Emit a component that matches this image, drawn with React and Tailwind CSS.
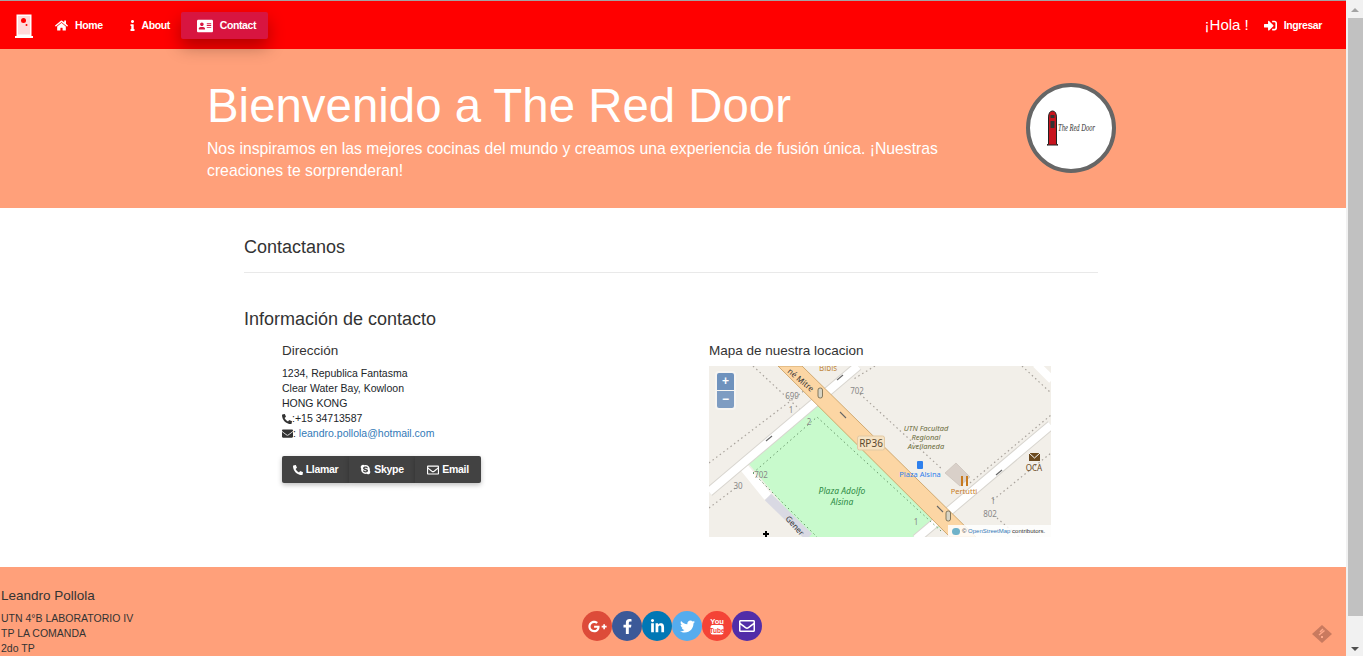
import React from "react";
import { FaHome, FaInfo, FaAddressCard, FaSignInAlt, FaPhoneAlt, FaEnvelope, FaRegEnvelope, FaSkype, FaGooglePlusG, FaFacebookF, FaLinkedinIn, FaTwitter } from "react-icons/fa";

function DoorLogo() {
  return (
    <svg width="18" height="24" viewBox="0 0 18 24" className="block">
      <rect x="1.5" y="0.5" width="15" height="21.5" fill="#fff" />
      <rect x="3" y="2" width="12" height="18.5" fill="#ffd9d9" />
      <rect x="0" y="22" width="18" height="2" fill="#fff" />
      <circle cx="8.5" cy="6.5" r="2.5" fill="#f00" />
      <circle cx="11.5" cy="11" r="1" fill="#f00" />
    </svg>
  );
}

function NavLink({ icon, label, gap = "gap-[7px]" }) {
  return (
    <a className={`flex items-center ${gap} text-[10.5px] font-bold tracking-[-0.4px] text-white`}>
      {icon}
      <span>{label}</span>
    </a>
  );
}

function RedDoorMark() {
  return (
    <svg width="50" height="36" viewBox="0 0 50 36" className="block">
      <path d="M2.5 34 V8 Q2.5 1 6.5 1 Q10.500 1 10.500 8 V34 L12 35 H1 Z" fill="#c8141e" stroke="#222" strokeWidth="1" />
      <rect x="4.500" y="5" width="4" height="3" fill="#333" />
      <rect x="4.500" y="11" width="4" height="7" fill="#333" />
      <text x="12" y="21" fontSize="11" fontStyle="italic" fill="#333" fontFamily="'Liberation Serif', serif" textLength="37" lengthAdjust="spacingAndGlyphs">The Red Door</text>
    </svg>
  );
}

function YoutubeMark() {
  return (
    <svg width="14" height="18" viewBox="0 0 14 18" className="block">
      <text x="7" y="7" fontSize="7.500" fontWeight="bold" textAnchor="middle" fill="#fff" fontFamily="'Liberation Sans', sans-serif">You</text>
      <rect x="0.500" y="8" width="13" height="9.500" rx="2" fill="#fff" />
      <text x="7" y="15.500" fontSize="6.500" fontWeight="bold" textAnchor="middle" fill="#f44336" fontFamily="'Liberation Sans', sans-serif">Tube</text>
    </svg>
  );
}

function MapImage() {
  const labelFont = "'Noto Sans', sans-serif";
  return (
    <svg width="342" height="171" viewBox="0 0 342 171" className="block bg-[#f2efe9]">
      <g fill="none" stroke="#a9a39c" strokeWidth="1.2" strokeDasharray="1.5 3">
        <path d="M44 0 L128 78" />
        <path d="M0 97 L96 24" />
        <path d="M0 142 L29 120" />
        <path d="M166 0 L143 14" />
        <path d="M151 28 L234 104" />
        <path d="M261 117 L342 49" />
        <path d="M313 0 L342 27" />
        <path d="M284 134 L342 87" />
        <path d="M288 152 L310 171" />
      </g>
      <polygon points="39,97 108,37 234,160 207,171 100,171 60,122" fill="#c8facc" />
      <path d="M33 99 L59 131" stroke="#fff" strokeWidth="9" fill="none" />
      <path d="M59 131 L100 171" stroke="#d9d9e3" strokeWidth="9" fill="none" />
      <path d="M0 126 L149 0" stroke="#d8d5cf" strokeWidth="10" fill="none" />
      <path d="M0 126 L149 0" stroke="#fff" strokeWidth="8" fill="none" />
      <path d="M207 173 L342 59" stroke="#d8d5cf" strokeWidth="10" fill="none" />
      <path d="M207 173 L342 59" stroke="#fff" strokeWidth="8" fill="none" />
      <path d="M327 -2 L343 14" stroke="#fff" strokeWidth="8" fill="none" />
      <polygon points="69,0 93,0 267,171 241,171" fill="#fcd6a4" stroke="#c79c5d" strokeWidth="0.8" />
      <polygon points="236,107 247,97 261,111 251,120" fill="#d9d0c9" stroke="#c4bcb4" strokeWidth="0.6" />
      <g fill="none" stroke="#6b9a6d" strokeWidth="1" strokeDasharray="1.5 3">
        <path d="M44 107 L108 51 L232 165" />
        <path d="M44 107 L108 171" />
      </g>
      <g stroke="#666" strokeWidth="1.1" fill="none">
        <path d="M57 75 L63 70" />
        <path d="M128 14 L134 9" />
        <path d="M131 46 L137 52" />
        <path d="M287 109 L293 104" />
        <path d="M228 140 L234 146" />
      </g>
      <rect x="109" y="22" width="4.500" height="10" rx="2" fill="#d8d4c4" stroke="#6b5f45" strokeWidth="0.8" />
      <rect x="237" y="145" width="4.500" height="10" rx="2" fill="#d8d4c4" stroke="#6b5f45" strokeWidth="0.8" />
      <rect x="148.500" y="70" width="27" height="14" rx="2" fill="#f6e3c4" stroke="#e2c9a3" />
      <g fontFamily={labelFont}>
        <text x="162" y="81" fontSize="10" textAnchor="middle" fill="#5c4a2e">RP36</text>
        <text x="78" y="6" fontSize="8" fill="#333" transform="rotate(40 78 6)">né Mitre</text>
        <text x="119" y="5" fontSize="8" textAnchor="middle" fill="#c28a3f">Bibis</text>
        <text x="83" y="33" fontSize="8" textAnchor="middle" fill="#888">699</text>
        <text x="148" y="28" fontSize="8" textAnchor="middle" fill="#888">702</text>
        <text x="82" y="47" fontSize="8" textAnchor="middle" fill="#888">1</text>
        <text x="100" y="59" fontSize="8" textAnchor="middle" fill="#888">2</text>
        <text x="52" y="112" fontSize="8" textAnchor="middle" fill="#888">702</text>
        <text x="29" y="123" fontSize="8" textAnchor="middle" fill="#888">30</text>
        <text x="207" y="159" fontSize="8" textAnchor="middle" fill="#888">1</text>
        <text x="284" y="138" fontSize="8" textAnchor="middle" fill="#888">1</text>
        <text x="281" y="151" fontSize="8" textAnchor="middle" fill="#888">802</text>
        <text x="133" y="128" fontSize="8.500" fontStyle="italic" textAnchor="middle" fill="#2e8b45">Plaza Adolfo</text>
        <text x="133" y="139" fontSize="8.500" fontStyle="italic" textAnchor="middle" fill="#2e8b45">Alsina</text>
        <text x="217" y="65" fontSize="7.500" fontStyle="italic" textAnchor="middle" fill="#6b6b3a">UTN Facultad</text>
        <text x="217" y="74" fontSize="7.500" fontStyle="italic" textAnchor="middle" fill="#6b6b3a">Regional</text>
        <text x="217" y="83" fontSize="7.500" fontStyle="italic" textAnchor="middle" fill="#6b6b3a">Avellaneda</text>
        <text x="211" y="111" fontSize="7.500" textAnchor="middle" fill="#2f80ed">Plaza Alsina</text>
        <text x="255" y="128" fontSize="7.500" textAnchor="middle" fill="#c77a1f">Pertutti</text>
        <text x="325" y="105" fontSize="8" textAnchor="middle" fill="#6b4a1f">OCA</text>
        <text x="76" y="153" fontSize="8" fill="#333" transform="rotate(48 76 153)">Gener</text>
      </g>
      <rect x="208" y="95" width="6" height="8" rx="1" fill="#2f80ed" />
      <path d="M253 110 V120 M258 110 V120" stroke="#c77a1f" strokeWidth="2" />
      <rect x="320" y="87" width="11" height="8" fill="#6b4a1f" />
      <path d="M320 87 L325.500 92 L331 87" stroke="#fff" strokeWidth="1" fill="none" />
      <path d="M54 168 H60 M57 165 V171" stroke="#000" strokeWidth="2" />
    </svg>
  );
}

function Social({ bg, children }) {
  return <a className={`w-[30px] h-[30px] rounded-full flex items-center justify-center text-white text-[15px] ${bg}`}>{children}</a>;
}

function ActionBtn({ icon, label, w }) {
  return (
    <button className={`${w} h-[27px] flex items-center justify-center gap-[3px] bg-[#424242] text-white text-[10.5px] font-bold tracking-[-0.3px] shadow-[0_2px_5px_rgba(0,0,0,0.26)] first:rounded-l-[2px] last:rounded-r-[2px]`}>
      {icon}
      <span>{label}</span>
    </button>
  );
}

export default function App() {
  return (
    <div className="flex h-[656px] w-[1363px] overflow-hidden bg-white font-['Liberation_Sans',Arial,sans-serif] text-[#212529]">
      <div className="w-[1346px] flex flex-col shrink-0">
        <div className="h-px bg-[#a3a3a3] shrink-0" />
        <nav className="relative z-10 h-[48px] shrink-0 bg-[#ff0000] flex items-center pl-[15px] pr-[24px] pt-[1px]">
          <DoorLogo />
          <div className="flex items-center ml-[22px]">
            <NavLink icon={<FaHome className="text-[13px]" />} label="Home" />
            <div className="ml-[24px]">
              <NavLink icon={<FaInfo className="text-[11px]" />} label="About" gap="gap-[4px]" />
            </div>
            <div className="ml-[11px] pl-[4px] w-[87px] h-[27px] rounded-[2px] bg-[#d81540] flex items-center justify-center shadow-[0_8px_17px_rgba(0,0,0,0.3)]">
              <NavLink icon={<FaAddressCard className="text-[16px]" />} label="Contact" />
            </div>
          </div>
          <div className="ml-auto flex items-center gap-[15px]">
            <span className="text-[15px] text-white">¡Hola !</span>
            <NavLink icon={<FaSignInAlt className="text-[13px]" />} label="Ingresar" />
          </div>
        </nav>

        <header className="h-[159px] shrink-0 bg-[#ffa07a] flex items-start pl-[207px] text-white">
          <div className="w-[740px] pt-[28px]">
            <h1 className="text-[47.4px] leading-[58px] font-normal whitespace-nowrap">Bienvenido a The Red Door</h1>
            <p className="mt-[3px] text-[15.75px] leading-[22px]">Nos inspiramos en las mejores cocinas del mundo y creamos una experiencia de fusión única. ¡Nuestras creaciones te sorprenderan!</p>
          </div>
          <div className="ml-[79px] mt-[34px] w-[90px] h-[90px] rounded-full border-[4px] border-[#666] bg-white flex items-center justify-center">
            <RedDoorMark />
          </div>
        </header>

        <main className="h-[359px] shrink-0 pl-[244px] w-full">
          <div className="w-[854px]">
            <h2 className="pt-[28px] text-[18px] leading-[22px] text-[#333] pb-[14px] border-b border-[#e9e9e9]">Contactanos</h2>
            <h3 className="mt-[35px] text-[18px] leading-[22px] text-[#333]">Información de contacto</h3>
            <div className="flex mt-[11px]">
              <div className="ml-[38px] w-[427px] shrink-0">
                <h4 className="text-[13.5px] leading-[20px] text-[#333]">Dirección</h4>
                <address className="mt-[5px] not-italic text-[10.5px] leading-[15px] text-[#212529]">
                  <div>1234, Republica Fantasma</div>
                  <div>Clear Water Bay, Kowloon</div>
                  <div>HONG KONG</div>
                  <div className="flex items-center"><FaPhoneAlt className="text-[10px] text-[#333]" /><span>:+15 34713587</span></div>
                  <div className="flex items-center"><FaEnvelope className="text-[11px] text-[#333]" /><span>:&nbsp;<span className="text-[#337ab7]">leandro.pollola@hotmail.com</span></span></div>
                </address>
                <div className="flex mt-[15px]">
                  <ActionBtn icon={<FaPhoneAlt className="text-[10px]" />} label="Llamar" w="w-[67px]" />
                  <ActionBtn icon={<FaSkype className="text-[11px]" />} label="Skype" w="w-[66px]" />
                  <ActionBtn icon={<FaRegEnvelope className="text-[12px]" />} label="Email" w="w-[66px]" />
                </div>
              </div>
              <div className="w-[342px]">
                <h4 className="text-[13.5px] leading-[20px] text-[#333]">Mapa de nuestra locacion</h4>
                <div className="relative mt-[5px] w-[342px] h-[171px] overflow-hidden">
                  <MapImage />
                  <div className="absolute left-[6px] top-[5px] p-[2px] bg-white/40 rounded-[4px] flex flex-col gap-px">
                    <span className="w-[17px] h-[17px] rounded-t-[2px] bg-[#6f92bd] text-white font-bold text-[12px] leading-[16px] text-center">+</span>
                    <span className="w-[17px] h-[17px] rounded-b-[2px] bg-[#7e9cc2] text-white font-bold text-[12px] leading-[16px] text-center">−</span>
                  </div>
                  <div className="absolute right-0 bottom-0 h-[12px] w-[103px] bg-white/85 flex items-center pl-[4px] gap-[2px] text-[6px] leading-none whitespace-nowrap text-[#333]">
                    <span className="w-[8px] h-[7px] rounded-full bg-[#6fb2c9] shrink-0" />
                    <span>© <span className="text-[#337ab7]">OpenStreetMap</span> contributors.</span>
                  </div>
                </div>
              </div>
            </div>
          </div>
        </main>

        <footer className="relative flex-1 bg-[#ffa07a] pl-px pt-[20px] text-[#333]">
          <div className="text-[13.5px] leading-[17px]">Leandro Pollola</div>
          <div className="mt-[7px] text-[10.5px] leading-[15px]">
            <div>UTN 4°B LABORATORIO IV</div>
            <div>TP LA COMANDA</div>
            <div>2do TP</div>
          </div>
          <div className="absolute left-[582px] top-[44px] flex">
            <Social bg="bg-[#dd4b39]"><FaGooglePlusG className="text-[19px]" /></Social>
            <Social bg="bg-[#3b5998]"><FaFacebookF /></Social>
            <Social bg="bg-[#0077b5]"><FaLinkedinIn /></Social>
            <Social bg="bg-[#55acee]"><FaTwitter /></Social>
            <Social bg="bg-[#f44336]"><YoutubeMark /></Social>
            <Social bg="bg-[#512da8]"><FaRegEnvelope className="text-[16px]" /></Social>
          </div>
          <svg width="20" height="18" viewBox="0 0 20 18" className="absolute left-[1312px] top-[58px]">
            <path d="M10 0 L20 9 L10 18 L0 9 Z" fill="#c97a5f" />
            <path d="M8 7 L11 4 M7 10 L12.500 5.500" stroke="#ffa98a" strokeWidth="1.500" />
            <rect x="9" y="11" width="2" height="2" fill="#ffa98a" />
          </svg>
        </footer>
      </div>

      <div className="w-[17px] shrink-0 bg-[#f1f1f1] flex flex-col items-end pt-[8px]">
        <span className="mr-[4px] w-0 h-0 border-x-[4px] border-x-transparent border-b-[4px] border-b-[#a3a3a3]" />
        <span className="mt-[6px] w-[15px] h-[598px] bg-[#c1c1c1]" />
        <span className="mr-[4px] mt-[31px] w-0 h-0 border-x-[4px] border-x-transparent border-t-[4px] border-t-[#505050]" />
      </div>
    </div>
  );
}
